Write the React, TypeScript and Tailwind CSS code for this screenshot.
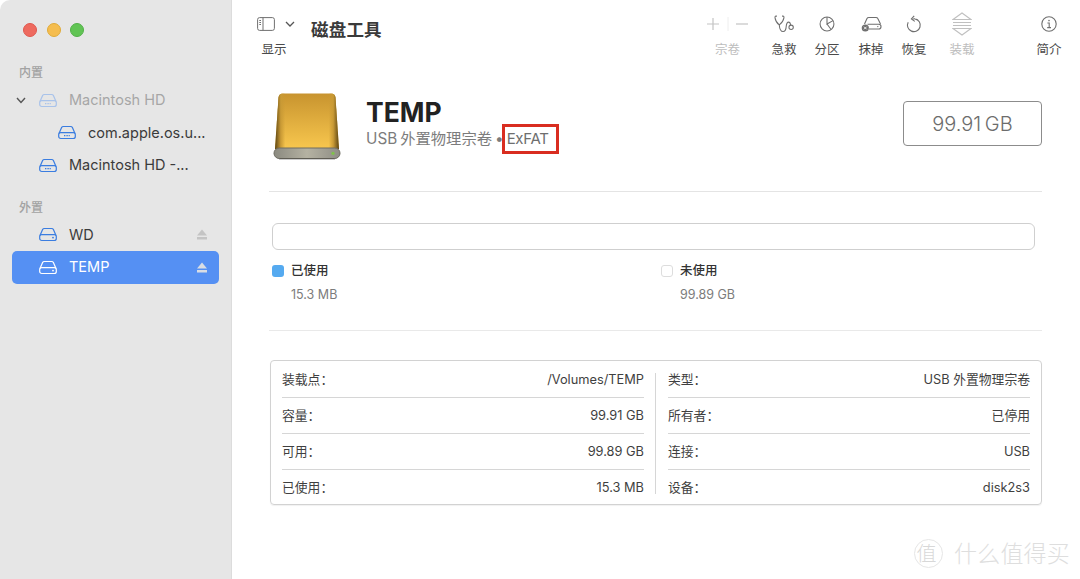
import React from "react";

const FONT = "font-['Inter','Liberation_Sans','Noto_Sans_CJK_SC',sans-serif]";

function DriveIcon({ color, dots, x }: { color: string; dots?: boolean; x?: number }) {
  return (
    <svg width="18" height="15" viewBox="0 0 18 15" fill="none" className="shrink-0">
      <path d="M1 8.5 L3.6 2.6 Q4 1.5 5.4 1.5 H12.6 Q14 1.5 14.4 2.6 L17 8.5" stroke={color} strokeWidth="1.2" />
      <rect x="0.7" y="7.6" width="16.6" height="5.9" rx="2" stroke={color} strokeWidth="1.2" />
      {dots ? (
        <path d="M6 10.6 H12" stroke={color} strokeWidth="1.3" strokeDasharray="1 0.6" />
      ) : (
        <circle cx={x ?? 14} cy="10.6" r="0.9" fill={color} />
      )}
    </svg>
  );
}

function Eject({ color }: { color: string }) {
  return (
    <svg width="10" height="11" viewBox="0 0 10 11" className="shrink-0">
      <path d="M5 0.5 L10 6.5 H0 Z" fill={color} />
      <rect x="0" y="8" width="10" height="2.5" fill={color} />
    </svg>
  );
}

function SidebarHead({ text, className }: { text: string; className: string }) {
  return <div className={`pl-[19px] text-[12px] leading-[16px] font-medium text-[#a2a2a2] ${className}`}>{text}</div>;
}

function SidebarRow({
  icon,
  label,
  pad,
  muted,
  chevron,
  eject,
  active,
}: {
  icon: React.ReactNode;
  label: string;
  pad: string;
  muted?: boolean;
  chevron?: boolean;
  eject?: boolean;
  active?: boolean;
}) {
  return (
    <div
      className={`relative flex h-[32.5px] items-center rounded-[5px] mx-[12px] pr-[12px] ${pad} ${active ? "bg-[#5590f3] text-white" : muted ? "text-[#a6a6a6]" : "text-[#3b3b3b]"}`}
    >
      {chevron && (
        <svg width="10" height="7" viewBox="0 0 10 7" fill="none" className="absolute left-[4px] top-[13px]">
          <path d="M1 1 L5 5.5 L9 1" stroke="#555" strokeWidth="1.4" />
        </svg>
      )}
      {icon}
      <span className="ml-[12px] text-[14.5px] leading-[20px] whitespace-nowrap">{label}</span>
      {eject && <span className="ml-auto flex"><Eject color={active ? "#d9dde4" : "#c4c4c4"} /></span>}
    </div>
  );
}

function ToolItem({ label, icon, disabled, className }: { label: string; icon: React.ReactNode; disabled?: boolean; className: string }) {
  return (
    <div className={`flex shrink-0 flex-col items-center ${className}`}>
      <div className="flex h-[26px] items-center justify-center">{icon}</div>
      <div className={`mt-[5px] text-[12.5px] leading-[16px] ${disabled ? "text-[#bdbdbd]" : "text-[#4a4a4a]"}`}>{label}</div>
    </div>
  );
}

function Row({ k, v, last }: { k: string; v: string; last?: boolean }) {
  return (
    <div className={`flex h-[36px] items-center justify-between text-[12.8px] ${last ? "" : "border-b border-[#d6d6d6]"}`}>
      <span className="text-[#3f3f3f]">{k}</span>
      <span className="text-[#3f3f3f]">{v}</span>
    </div>
  );
}

const ic = "#6f6f6f";

export default function App() {
  return (
    <div className={`relative flex h-[579px] w-[1080px] overflow-hidden bg-white ${FONT}`}>
      {/* Sidebar */}
      <aside className="flex w-[232px] shrink-0 flex-col rounded-tl-[10px] border-r border-[#dcdcdc] bg-[#e6e6e6]">
        <div className="flex gap-[9.5px] pl-[23px] pt-[23px]">
          <span className="h-[14px] w-[14px] rounded-full border border-[#e0574e] bg-[#ee6a5f]" />
          <span className="h-[14px] w-[14px] rounded-full border border-[#e0ab38] bg-[#f5bd4f]" />
          <span className="h-[14px] w-[14px] rounded-full border border-[#52b048] bg-[#61c454]" />
        </div>
        <SidebarHead text="内置" className="mt-[28px]" />
        <div className="mt-[3px] flex flex-col">
          <SidebarRow icon={<DriveIcon color="#a9c3ea" dots />} label="Macintosh HD" pad="pl-[27px]" muted chevron />
          <SidebarRow icon={<DriveIcon color="#3b7de0" dots />} label="com.apple.os.u..." pad="pl-[46px]" />
          <SidebarRow icon={<DriveIcon color="#3b7de0" dots />} label="Macintosh HD -..." pad="pl-[27px]" />
        </div>
        <SidebarHead text="外置" className="mt-[18.5px]" />
        <div className="mt-[2.5px] flex flex-col">
          <SidebarRow icon={<DriveIcon color="#3b7de0" />} label="WD" pad="pl-[27px]" eject />
          <SidebarRow icon={<DriveIcon color="#ffffff" />} label="TEMP" pad="pl-[27px]" eject active />
        </div>
      </aside>

      {/* Main */}
      <main className="flex min-w-0 flex-1 flex-col">
        {/* Toolbar */}
        <header className="flex h-[62px] shrink-0 items-start pt-[11px]">
          <div className="ml-[25px] flex w-[38px] shrink-0 flex-col items-center">
            <div className="flex h-[26px] w-full items-center justify-between">
              <svg width="18" height="14" viewBox="0 0 18 14" fill="none">
                <rect x="0.6" y="0.6" width="16.8" height="12.8" rx="2" stroke={ic} strokeWidth="1" />
                <path d="M6 0.6 V13.4" stroke={ic} strokeWidth="1" />
                <path d="M2.3 3.5 H4 M2.3 5.5 H4 M2.3 7.5 H4" stroke={ic} strokeWidth="1" />
              </svg>
              <svg width="10" height="6" viewBox="0 0 10 6" fill="none">
                <path d="M1 1 L5 5 L9 1" stroke="#555" strokeWidth="1.3" />
              </svg>
            </div>
            <div className="mt-[5px] whitespace-nowrap pr-[4px] text-[12.5px] leading-[16px] text-[#4a4a4a]">显示</div>
          </div>
          <h1 className="ml-[16px] mt-[7px] text-[17.5px] leading-[24px] font-bold tracking-[0.2px] text-[#3a3a3a]">磁盘工具</h1>

          <div className="ml-auto flex items-start">
            <ToolItem
              disabled
              label="宗卷"
              className="mr-[7px] w-[56px]"
              icon={
                <svg width="44" height="16" viewBox="0 0 44 16" fill="none">
                  <path d="M7 2 V14 M1 8 H13" stroke="#c4c4c4" strokeWidth="1.2" />
                  <path d="M22 1 V15" stroke="#eeeeee" strokeWidth="1" />
                  <path d="M30 8 H42" stroke="#c4c4c4" strokeWidth="1.2" />
                </svg>
              }
            />
            <ToolItem
              label="急救"
              className="w-[43px]"
              icon={
                <svg width="21" height="18" viewBox="0 0 22 19" fill="none" stroke={ic} strokeWidth="1.1">
                  <path d="M3 1.2 H2 Q0.8 1.2 1 3 Q1.6 7.5 5.5 10.5 Q9.6 7.5 10.4 3 Q10.6 1.2 9.4 1.2 H8.4" />
                  <path d="M5.5 10.5 Q6 17.5 9.5 17.5 Q12.5 17.5 12.8 12 Q13.2 7.5 15.3 7.5 Q17 7.5 17.4 10.5" />
                  <circle cx="18" cy="13" r="2.3" />
                </svg>
              }
            />
            <ToolItem
              label="分区"
              className="w-[43px]"
              icon={
                <svg width="16" height="16" viewBox="0 0 18 18" fill="none" stroke={ic} strokeWidth="1.2">
                  <circle cx="9" cy="9" r="7.8" />
                  <path d="M9 1.2 V9 L15.8 5.2" />
                  <path d="M9 9 L13.6 15.2" />
                </svg>
              }
            />
            <ToolItem
              label="抹掉"
              className="ml-[1px] w-[43px]"
              icon={
                <svg width="21" height="17" viewBox="0 0 21 17" fill="none" stroke={ic} strokeWidth="1.1">
                  <path d="M3.5 8 L6 2.6 Q6.5 1.5 7.8 1.5 H15 Q16.3 1.5 16.8 2.6 L19.5 8" />
                  <path d="M6.5 8.2 H17.8 Q20 8.2 20 10.4 Q20 13 17.8 13 H8" />
                  <circle cx="4.3" cy="12" r="3.6" fill={ic} stroke="none" />
                  <path d="M3 10.7 L5.6 13.3 M5.6 10.7 L3 13.3" stroke="#ffffff" strokeWidth="0.9" />
                  <circle cx="16.8" cy="10.6" r="0.7" fill={ic} stroke="none" />
                </svg>
              }
            />
            <ToolItem
              label="恢复"
              className="w-[43px]"
              icon={
                <svg width="16" height="19" viewBox="0 0 16 19" fill="none" stroke={ic} strokeWidth="1.1">
                  <path d="M6.5 4.2 Q8 3.6 9 3.9 A6.4 6.4 0 1 1 2.2 7.2" />
                  <path d="M8.2 0.8 L5.4 4 L8.8 6.4" />
                </svg>
              }
            />
            <ToolItem
              disabled
              label="装载"
              className="ml-[5px] w-[43px]"
              icon={
                <svg width="20" height="24" viewBox="0 0 20 24" fill="none" stroke="#c0c0c0" strokeWidth="1.1">
                  <path d="M1 7.5 L10 1 L19 7.5 Z" />
                  <path d="M1 10.5 H19 M1 13.5 H19" />
                  <path d="M1 16.5 L10 23 L19 16.5 Z" />
                </svg>
              }
            />
            <ToolItem
              label="简介"
              className="ml-[44px] mr-[9.5px] w-[43px]"
              icon={
                <svg width="16" height="16" viewBox="0 0 16 16" fill="none" stroke={ic} strokeWidth="1.1">
                  <circle cx="8" cy="8" r="7.2" />
                  <circle cx="8" cy="4.6" r="0.8" fill={ic} stroke="none" />
                  <path d="M6.4 7 H8.2 V11.6 M6.2 11.6 H10" />
                </svg>
              }
            />
          </div>
        </header>

        {/* Content */}
        <div className="flex flex-col pl-[37px] pr-[38px]">
          {/* Volume header */}
          <section className="flex h-[130px] items-start border-b border-[#e4e4e4] pt-[31px]">
            <svg width="68" height="67" viewBox="0 0 68 67" className="ml-[4px] shrink-0">
              <defs>
                <linearGradient id="body" x1="0" y1="0" x2="0" y2="1">
                  <stop offset="0" stopColor="#c8942f" />
                  <stop offset="1" stopColor="#f8c74e" />
                </linearGradient>
                <linearGradient id="edge" x1="0" y1="0" x2="1" y2="0">
                  <stop offset="0" stopColor="#5b4413" />
                  <stop offset="0.09" stopColor="#c99a35" />
                  <stop offset="0.16" stopColor="#c99a3500" />
                  <stop offset="0.84" stopColor="#c99a3500" />
                  <stop offset="0.91" stopColor="#c99a35" />
                  <stop offset="1" stopColor="#5b4413" />
                </linearGradient>
                <linearGradient id="base" x1="0" y1="0" x2="1" y2="0">
                  <stop offset="0" stopColor="#8b8a80" />
                  <stop offset="0.5" stopColor="#b5b2a2" />
                  <stop offset="1" stopColor="#8e8d85" />
                </linearGradient>
              </defs>
              <path d="M5.5 4.5 Q6 0.6 10 0.6 H58 Q62 0.6 62.5 4.5 L66 56 H2 Z" fill="url(#body)" />
              <path d="M5.5 4.5 Q6 0.6 10 0.6 H58 Q62 0.6 62.5 4.5 L66 56 H2 Z" fill="url(#edge)" />
              <rect x="1" y="55" width="66" height="10.5" rx="5.2" fill="url(#base)" stroke="#6e6c62" strokeWidth="1" />
              <path d="M6 66.2 H62" stroke="#00000044" strokeWidth="1.2" />
              <circle cx="60" cy="60.3" r="1.6" fill="#7ec24a" />
            </svg>
            <div className="ml-[25px] flex flex-col">
              <div className="mt-[3px] text-[26.5px] leading-[33px] font-bold text-[#222222]">TEMP</div>
              <div className="mt-[-5px] flex items-center text-[15.3px] leading-[22px] text-[#7c7c7c]">
                <span>USB</span>
                <span className="ml-[3px]">外置物理宗卷</span>
                <span className="ml-[3px]">•</span>
                <span className="ml-[-2px] w-[57px] shrink-0 border-[3px] border-[#d92d20] px-[2px] py-[1px] text-[15px] leading-[22px] tracking-[-0.3px] text-[#6e6e6e]">ExFAT</span>
              </div>
            </div>
            <div className="mt-[8px] ml-auto flex h-[45px] w-[139px] items-center justify-center rounded-[4px] border border-[#8c8c8c] text-[20px] font-light [word-spacing:-2px] text-[#6c6c6c]">
              99.91 GB
            </div>
          </section>

          {/* Usage */}
          <section className="flex h-[139px] flex-col border-b border-[#e9e9e9] pl-[3px]">
            <div className="mt-[31px] mr-[7px] h-[27px] rounded-[6px] border border-[#cfcfcf]" />
            <div className="mt-[13px] flex">
              <div className="w-[389px]">
                <div className="flex items-center">
                  <span className="h-[12px] w-[12px] rounded-[3px] bg-[#55aaf0]" />
                  <span className="ml-[7px] text-[12.5px] leading-[16px] font-medium text-[#333333]">已使用</span>
                </div>
                <div className="mt-[8px] pl-[19px] text-[12.5px] leading-[16px] text-[#7c7c7c]">15.3 MB</div>
              </div>
              <div>
                <div className="flex items-center">
                  <span className="h-[12px] w-[12px] rounded-[3px] border border-[#dddddd]" />
                  <span className="ml-[7px] text-[12.5px] leading-[16px] font-medium text-[#333333]">未使用</span>
                </div>
                <div className="mt-[8px] pl-[19px] text-[12.5px] leading-[16px] text-[#7c7c7c]">99.89 GB</div>
              </div>
            </div>
          </section>

          {/* Info table */}
          <section className="mt-[29px] ml-[1px] flex h-[145px] rounded-[4px] border border-[#d2d2d2] px-[11px] py-[1px] shadow-[0_1px_1px_rgba(0,0,0,0.06)]">
            <div className="w-[362px] shrink-0">
              <Row k="装载点：" v="/Volumes/TEMP" />
              <Row k="容量：" v="99.91 GB" />
              <Row k="可用：" v="99.89 GB" />
              <Row k="已使用：" v="15.3 MB" last />
            </div>
            <div className="ml-[11px] mr-[12px] mt-[11px] h-[121px] w-[1px] shrink-0 bg-[#d6d6d6]" />
            <div className="min-w-0 flex-1">
              <Row k="类型：" v="USB 外置物理宗卷" />
              <Row k="所有者：" v="已停用" />
              <Row k="连接：" v="USB" />
              <Row k="设备：" v="disk2s3" last />
            </div>
          </section>
        </div>
      </main>

      {/* Watermark */}
      <div className="absolute left-[914px] top-[539px] flex items-center">
        <span className="flex h-[29px] w-[29px] items-center justify-center rounded-full border border-[#e6e6e6] pr-[4px] text-[20px] font-light text-[#d8d8d8]">值</span>
        <span className="ml-[11px] text-[23px] leading-[28px] font-light tracking-[0.2px] text-[#dedede]">什么值得买</span>
      </div>
    </div>
  );
}
